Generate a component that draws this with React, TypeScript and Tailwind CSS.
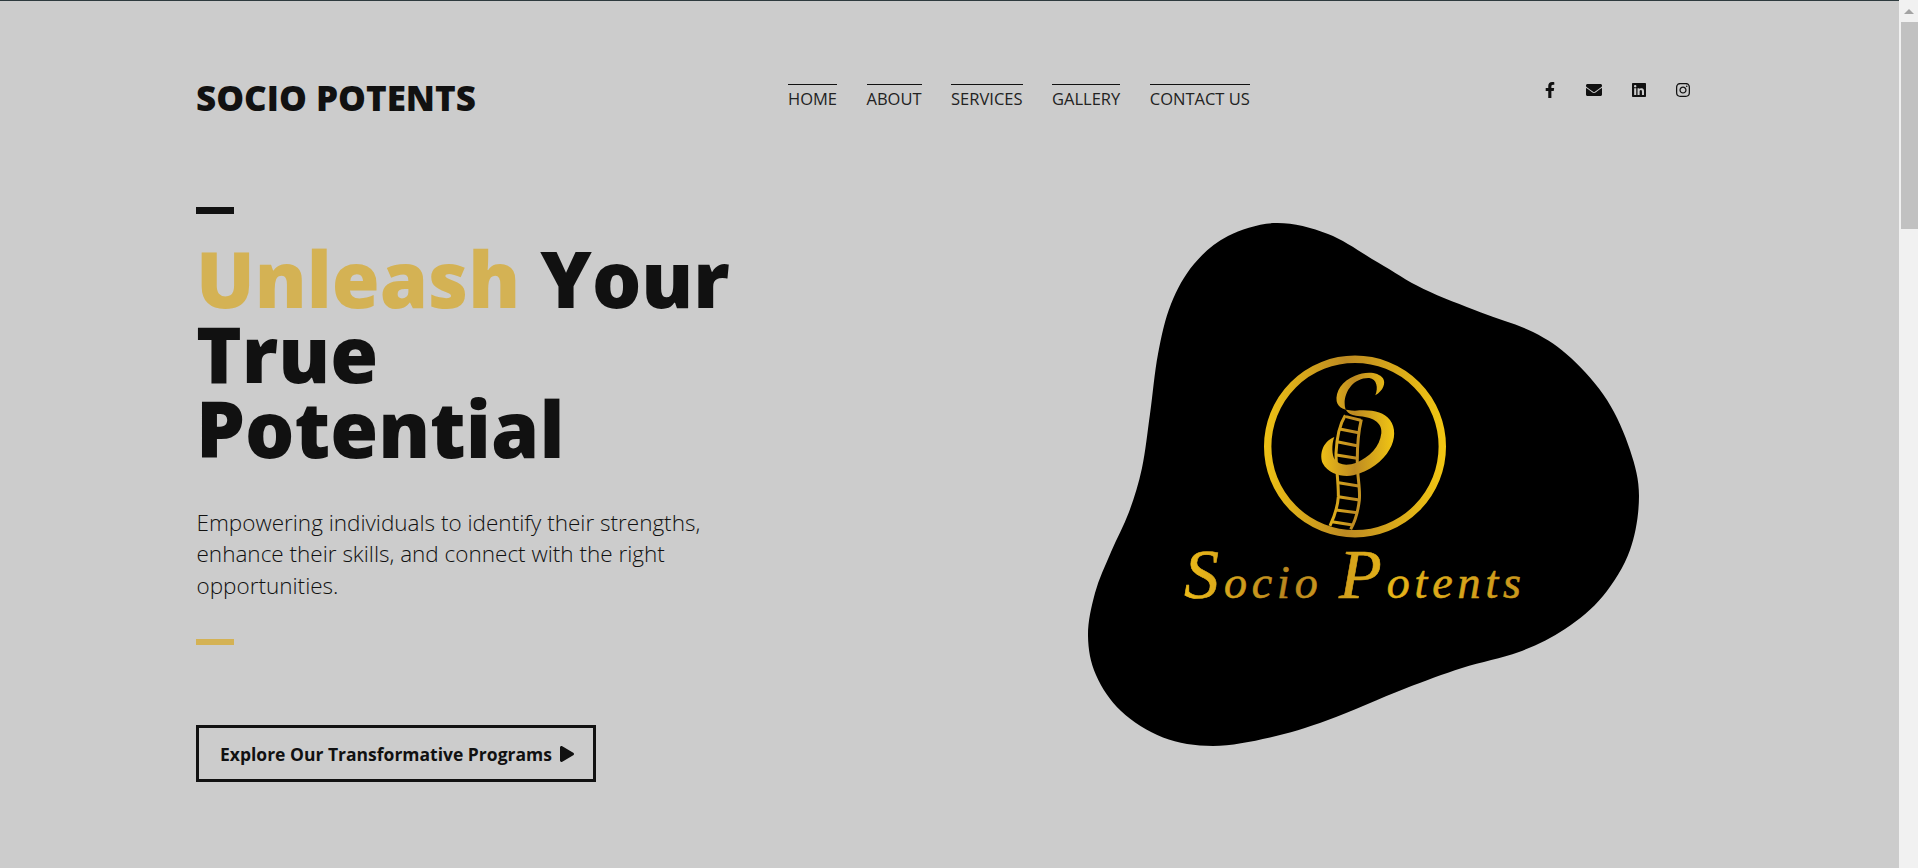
import { FaFacebookF, FaEnvelope, FaLinkedin, FaInstagram, FaPlay } from "react-icons/fa";

const blobPoints: [number, number][] = [
  [216, 23], [268, 34], [318, 62.5], [363.6, 89], [421, 112.5], [473, 132], [511, 158], [547, 200],
  [570, 250], [579, 296], [570, 350], [543, 396], [505, 429], [459, 452], [402, 468], [344, 489],
  [268, 520], [210, 537.5], [153, 546], [103, 537.5], [61, 511], [36, 475], [28, 436], [35, 393],
  [51, 352], [69, 312], [82, 268], [90, 214], [98, 154], [111, 104], [134, 64], [168, 36],
];

function smoothPath(pts: [number, number][]) {
  const n = pts.length;
  let d = `M${pts[0][0]} ${pts[0][1]}`;
  for (let i = 0; i < n; i++) {
    const p0 = pts[(i - 1 + n) % n];
    const p1 = pts[i];
    const p2 = pts[(i + 1) % n];
    const p3 = pts[(i + 2) % n];
    const c1x = p1[0] + (p2[0] - p0[0]) / 6;
    const c1y = p1[1] + (p2[1] - p0[1]) / 6;
    const c2x = p2[0] - (p3[0] - p1[0]) / 6;
    const c2y = p2[1] - (p3[1] - p1[1]) / 6;
    d += `C${c1x.toFixed(1)} ${c1y.toFixed(1)} ${c2x.toFixed(1)} ${c2y.toFixed(1)} ${p2[0]} ${p2[1]}`;
  }
  return d + "Z";
}

function Blob() {
  return (
    <svg width="600" height="560" viewBox="0 0 600 560" className="block">
      <defs>
        <linearGradient id="gold" gradientUnits="userSpaceOnUse" x1="200" y1="0" x2="390" y2="0">
          <stop offset="0" stopColor="#f0c414" />
          <stop offset="0.45" stopColor="#bd8a22" />
          <stop offset="1" stopColor="#f5ca12" />
        </linearGradient>
        <linearGradient id="goldZ" gradientUnits="userSpaceOnUse" x1="240" y1="0" x2="470" y2="0">
          <stop offset="0" stopColor="#efc016" />
          <stop offset="0.45" stopColor="#bd8a22" />
          <stop offset="1" stopColor="#f5ca12" />
        </linearGradient>
        <linearGradient id="goldT" gradientUnits="userSpaceOnUse" x1="120" y1="0" x2="470" y2="0">
          <stop offset="0" stopColor="#efbd18" />
          <stop offset="0.3" stopColor="#b9861f" />
          <stop offset="0.6" stopColor="#e6b418" />
          <stop offset="1" stopColor="#c8951d" />
        </linearGradient>
      </defs>
      <path d={smoothPath(blobPoints)} fill="#000" />
      <circle cx="295" cy="246.5" r="87.3" fill="none" stroke="url(#gold)" strokeWidth="7.4" />
      <g transform="translate(180 140) scale(0.3333)">
        <path
          fill="url(#goldZ)"
          d="M406 166C430 152 438 130 429 115C414 94 375 94 345 107C306 122 286 155 290 184C294 204 315 212 345 212C394 208 430 214 450 240C467 262 467 298 449 328C429 364 389 394 340 406C310 412 266 404 248 370C238 345 246 306 283 291C274 315 276 345 284 358C296 376 322 378 350 368C388 352 420 320 424 280C428 252 402 232 360 229C326 227 314 215 314 190C314 150 345 112 388 114C410 116 416 144 406 166Z"
        />
        <g fill="none" stroke="url(#goldZ)">
          <path strokeWidth="9" d="M316 226C298 255 290 295 288 340C288 380 296 430 295 470C293 505 283 530 270 558" />
          <path strokeWidth="9" d="M364 238C354 280 351 330 352 380C354 420 361 450 358 480C354 515 345 545 332 568" />
          <path
            strokeWidth="9"
            d="M318 230L362 241M299 267L356 278M291 305L351 317M289 345L351 355M291 385L352 395M296 428L356 438M295 470L358 480M288 510L352 518M276 545L338 555"
          />
        </g>
      </g>
      <text
        x="124"
        y="398"
        fill="url(#goldT)"
        stroke="url(#goldT)"
        strokeWidth="0.6"
        fontFamily="'Liberation Serif', serif"
        fontStyle="italic"
        fontSize="46"
        textLength="337"
        lengthAdjust="spacing"
      >
        <tspan fontSize="70">S</tspan>ocio <tspan fontSize="70">P</tspan>otents
      </text>
    </svg>
  );
}

const navItems = ["HOME", "ABOUT", "SERVICES", "GALLERY", "CONTACT US"];

export default function App() {
  return (
    <div className="flex h-[868px] overflow-hidden bg-[#f1f1f1] font-['Open_Sans',sans-serif] text-[#111111]">
      <main className="w-[1899px] shrink-0 border-t border-[#2d3a3e] bg-[#cccccc] pl-[196px]">
        <header className="flex h-[206px] items-start">
          <div className="w-[592px] pt-[75px] text-[35px] leading-[44px] font-extrabold">SOCIO POTENTS</div>
          <nav className="flex w-[754px] gap-[29.5px] pt-[83px]">
            {navItems.map((item) => (
              <a key={item} className="border-t border-[#111111] pt-[3px] text-[16.5px] leading-[22px] text-[#222222]">
                {item}
              </a>
            ))}
          </nav>
          <div className="flex gap-[28.4px] pt-[81px] text-[#111111]">
            <FaFacebookF className="h-[16px] w-[16px]" />
            <FaEnvelope className="h-[16px] w-[16px]" />
            <FaLinkedin className="h-[16px] w-[16px]" />
            <FaInstagram className="h-[16px] w-[16px]" />
          </div>
        </header>
        <section className="flex items-start">
          <div className="w-[864px] shrink-0">
            <div className="h-[7px] w-[38px] bg-[#111111]" />
            <h1 className="mt-[27px] w-[550px] text-[77.6px] leading-[75px] font-extrabold">
              <span className="text-[#d4b254]">Unleash</span> Your True Potential
            </h1>
            <p className="mt-[41px] w-[540px] pl-[0.5px] text-[22.5px] leading-[31.4px] font-light">
              Empowering individuals to identify their strengths, enhance their skills, and connect with the right
              opportunities.
            </p>
            <div className="mt-[38px] h-[6px] w-[38px] bg-[#d4b254]" />
            <a className="mt-[80px] flex h-[57px] w-[400px] items-center gap-[7px] border-[3px] border-[#111111] pl-[21px] text-[17.5px] font-bold">
              Explore Our Transformative Programs
              <FaPlay className="h-[16px] w-[16px]" />
            </a>
          </div>
          <div className="-mt-[7px]">
            <Blob />
          </div>
        </section>
      </main>
      <aside className="flex w-[19px] flex-col items-end">
        <div className="flex h-[22px] w-full items-center justify-center pl-[1px]">
          <div className="h-0 w-0 border-x-[5px] border-b-[5px] border-x-transparent border-b-[#a3a3a3]" />
        </div>
        <div className="h-[207px] w-[17px] bg-[#c1c1c1]" />
      </aside>
    </div>
  );
}
